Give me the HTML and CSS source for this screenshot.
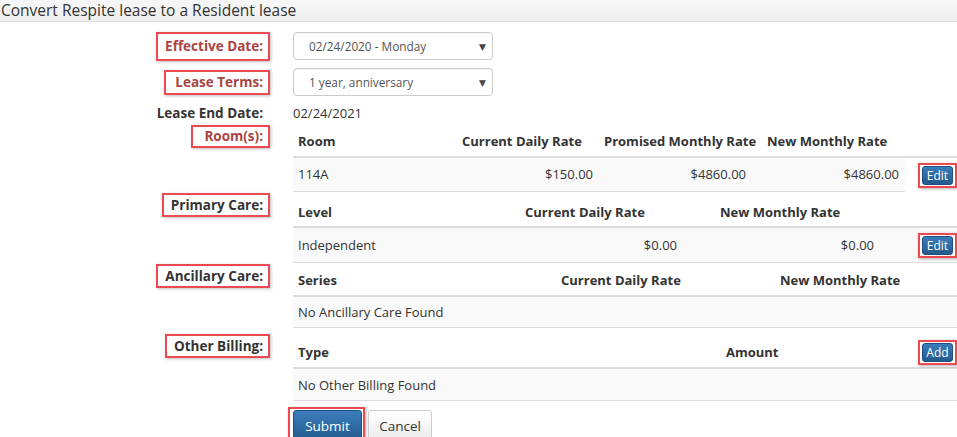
FILE: index.html
```html
<!DOCTYPE html>
<html>
<head>
<meta charset="utf-8">
<link rel="stylesheet" href="styles.css">
</head>
<body>
<div class="title-bar">Convert Respite lease to a Resident lease</div>
<div class="form">
  <div class="row row-eff">
    <div class="label"><span class="mark mark-eff req">Effective Date:</span></div>
    <div class="select"><span>02/24/2020 - Monday</span><span class="caret">▼</span></div>
  </div>
  <div class="row row-terms">
    <div class="label"><span class="mark mark-terms req">Lease Terms:</span></div>
    <div class="select"><span>1 year, anniversary</span><span class="caret">▼</span></div>
  </div>
  <div class="row row-end">
    <div class="label"><span class="plain">Lease End Date:</span></div>
    <div class="value">02/24/2021</div>
  </div>

  <div class="section sec-rooms">
    <div class="label"><span class="mark mark-rooms req">Room(s):</span></div>
    <div class="content">
      <div class="table t-rooms">
        <div class="thead">
          <div class="th">Room</div>
          <div class="th">Current Daily Rate</div>
          <div class="th">Promised Monthly Rate</div>
          <div class="th">New Monthly Rate</div>
        </div>
        <div class="tr-wrap">
          <div class="tr">
            <div class="td">114A</div>
            <div class="td num">$150.00</div>
            <div class="td num">$4860.00</div>
            <div class="td num pr6">$4860.00</div>
          </div>
          <span class="mark-btn"><button class="btn btn-sm btn-primary">Edit</button></span>
        </div>
      </div>
    </div>
  </div>

  <div class="section sec-primary">
    <div class="label"><span class="mark mark-std">Primary Care:</span></div>
    <div class="content">
      <div class="table t-primary">
        <div class="thead">
          <div class="th">Level</div>
          <div class="th">Current Daily Rate</div>
          <div class="th">New Monthly Rate</div>
        </div>
        <div class="tr">
          <div class="td">Independent</div>
          <div class="td num">$0.00</div>
          <div class="td num">$0.00</div>
          <div class="td btn-cell"><span class="mark-btn"><button class="btn btn-sm btn-primary">Edit</button></span></div>
        </div>
      </div>
    </div>
  </div>

  <div class="section sec-ancillary">
    <div class="label"><span class="mark mark-std">Ancillary Care:</span></div>
    <div class="content">
      <div class="table t-ancillary">
        <div class="thead">
          <div class="th">Series</div>
          <div class="th">Current Daily Rate</div>
          <div class="th">New Monthly Rate</div>
        </div>
        <div class="tr">
          <div class="td">No Ancillary Care Found</div>
        </div>
      </div>
    </div>
  </div>

  <div class="section sec-other">
    <div class="label"><span class="mark mark-std">Other Billing:</span></div>
    <div class="content">
      <div class="table t-other">
        <div class="thead">
          <div class="th">Type</div>
          <div class="th">Amount</div>
          <div class="th btn-th"><span class="mark-btn"><button class="btn btn-sm btn-primary">Add</button></span></div>
        </div>
        <div class="tr">
          <div class="td">No Other Billing Found</div>
        </div>
      </div>
    </div>
  </div>

  <div class="section sec-actions">
    <div class="label"></div>
    <div class="actions">
      <span class="mark-lg"><button class="btn btn-lg btn-primary">Submit</button></span>
      <button class="btn btn-lg btn-default">Cancel</button>
    </div>
  </div>
</div>
</body>
</html>
```

FILE: styles.css
```css
html, body {
  margin: 0;
  padding: 0;
}
body {
  width: 957px;
  height: 437px;
  overflow: hidden;
  font-family: "Open Sans", "Noto Sans", "DejaVu Sans", sans-serif;
  font-size: 13px;
  color: #333;
  background: #fff;
}

.title-bar {
  height: 22px;
  line-height: 21px;
  font-size: 15.5px;
  padding-left: 1px;
  color: #333;
  background: linear-gradient(#f7f7f7, #efefef);
  border-bottom: 1px solid #dcdcdc;
  box-sizing: border-box;
  white-space: nowrap;
}

.form {
  padding-top: 9px;
}

.row, .section {
  display: grid;
  grid-template-columns: 270px 1fr;
  column-gap: 23px;
}
.row {
  align-items: center;
}
.row-eff { margin-bottom: 7px; height: 30px; }
.row-terms { margin-bottom: 8px; height: 28px; }
.row-end { height: 19px; }

.label {
  display: flex;
  justify-content: flex-end;
  align-items: flex-start;
  font-weight: 700;
  font-size: 13.5px;
}
.row .label { align-items: center; }

.mark {
  display: inline-block;
  border: 2px solid #ea4a50;
  box-shadow: 1px 1px 3px rgba(0, 0, 0, 0.25);
  line-height: 20px;
  padding: 0 4px 0 7px;
  white-space: nowrap;
}
.req { color: #a94442; }
.mark-eff { line-height: 25px; padding: 0 5px 0 7px; }
.mark-terms { line-height: 21px; padding: 0 5px 0 9px; }
.mark-rooms { line-height: 19px; padding: 0 5px 0 11px; margin-top: 2px; }
.mark-std { line-height: 20px; padding: 0 5px 0 7px; }
.sec-primary .mark { margin-top: 1px; }
.sec-ancillary .mark { margin-top: 1px; }
.sec-other .mark { margin-top: 6px; }

.plain {
  line-height: 19px;
  padding-right: 7px;
}

.value {
  line-height: 19px;
}

.select {
  width: 200px;
  height: 28px;
  box-sizing: border-box;
  border: 1px solid #ccc;
  border-radius: 4px;
  display: flex;
  align-items: center;
  justify-content: space-between;
  padding: 0 6px 0 15px;
  font-size: 11.8px;
  color: #555;
  box-shadow: inset 0 1px 1px rgba(0, 0, 0, 0.04);
}
.caret {
  font-size: 9px;
  color: #444;
}

/* tables */
.table {
  width: 100%;
}
.thead {
  display: grid;
  border-bottom: 2px solid #ddd;
  font-weight: 700;
}
.th {
  padding-left: 5px;
  line-height: 20px;
  white-space: nowrap;
}
.tr {
  display: grid;
  background: #f9f9f9;
  border-bottom: 1px solid #ddd;
  align-items: center;
}
.td {
  line-height: 20px;
  padding: 0 5px;
  white-space: nowrap;
}
.num { text-align: right; }
.pr6 { padding-right: 6px; }

/* rooms */
.t-rooms .thead {
  grid-template-columns: 164px 142px 163px 1fr;
  padding: 8px 0 5px;
}
.tr-wrap {
  display: flex;
  align-items: center;
}
.t-rooms .tr {
  width: 612px;
  grid-template-columns: 164px 141px 153px 1fr;
  padding: 6px 0 7px;
  flex: none;
}
.tr-wrap .mark-btn { margin-left: 13px; }

/* primary */
.t-primary .thead {
  grid-template-columns: 227px 195px 1fr;
  padding: 10px 0 4px;
}
.t-primary .tr {
  grid-template-columns: 227px 162px 197px 1fr;
  padding: 7px 0 7px;
}
.btn-cell { padding-left: 39px; display: flex; height: 20px; align-items: center; }

/* ancillary */
.t-ancillary .thead {
  grid-template-columns: 263px 219px 1fr;
  padding: 7px 0 5px;
}
.t-ancillary .tr {
  padding: 5px 0 5px;
}

/* other */
.t-other .thead {
  grid-template-columns: 428px 192px 1fr;
  padding: 14px 0 5px;
  align-items: center;
}
.btn-th { display: flex; height: 20px; align-items: center; }
.t-other .tr {
  padding: 6px 0 5px;
}

/* buttons */
.btn {
  font-family: "Open Sans", "Noto Sans", sans-serif;
  border-radius: 3px;
  cursor: pointer;
  box-sizing: border-box;
  display: block;
}
.btn-primary {
  color: #fff;
  background: linear-gradient(#3a7dbb, #245a8c);
  border: 1px solid #1f4f7d;
}
.btn-default {
  color: #333;
  background: linear-gradient(#fff, #ececec);
  border: 1px solid #ccc;
}
.btn-sm {
  width: 31px;
  height: 19px;
  padding: 0;
  font-size: 12px;
  line-height: 17px;
}
.mark-btn {
  display: inline-block;
  flex: none;
  border: 2px solid #ea4a50;
  padding: 1px 2px;
  box-shadow: 1px 1px 3px rgba(0, 0, 0, 0.3);
}
.sec-actions {
  margin-top: 6px;
}
.actions {
  display: flex;
  align-items: flex-start;
}
.mark-lg {
  display: inline-block;
  border: 2px solid #ea4a50;
  padding: 1px 1px 0 3px;
  margin-left: -5px;
  margin-right: 3px;
  box-shadow: 1px 1px 3px rgba(0, 0, 0, 0.3);
}
.btn-lg {
  height: 32px;
  font-size: 13.5px;
  line-height: 30px;
  padding: 0;
}
.btn-lg.btn-primary { width: 69px; }
.btn-lg.btn-default { width: 64px; margin-top: 3px; }
```
